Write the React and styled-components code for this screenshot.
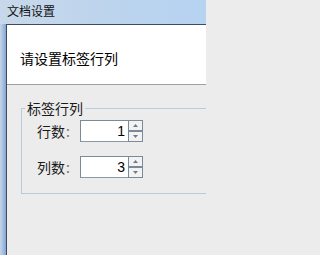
import styled, { createGlobalStyle } from "styled-components";

const GlobalStyle = createGlobalStyle`
  html, body {
    margin: 0;
    padding: 0;
    background: #ececec;
  }
  * {
    box-sizing: border-box;
  }
`;

const FONT = `"Noto Sans CJK SC", "Microsoft YaHei", sans-serif`;

const rows = [
  { label: "行数", value: 1 },
  { label: "列数", value: 3 },
];

const App = () => {
  return (
    <>
      <GlobalStyle />
      <Window>
        <TitleBar>文档设置</TitleBar>
        <Body>
          <LeftFrame />
          <Client>
            <Header>请设置标签行列</Header>
            <Panel>
              <GroupBox>
                <Legend>标签行列</Legend>
                {rows.map((row) => (
                  <Row key={row.label}>
                    <Label>
                      {row.label}
                      <Colon>:</Colon>
                    </Label>
                    <NumberBox>{row.value}</NumberBox>
                    <Spinner>
                      <SpinButton>
                        <Arrow viewBox="0 0 5 3">
                          <path d="M2.5 0 L5 3 L0 3 Z" />
                        </Arrow>
                      </SpinButton>
                      <SpinButton>
                        <Arrow viewBox="0 0 5 3">
                          <path d="M0 0 L5 0 L2.5 3 Z" />
                        </Arrow>
                      </SpinButton>
                    </Spinner>
                  </Row>
                ))}
              </GroupBox>
            </Panel>
          </Client>
        </Body>
      </Window>
    </>
  );
};

export default App;

const Window = styled.div`
  width: 206px;
  height: 255px;
  overflow: hidden;
  display: flex;
  flex-direction: column;
  font-family: ${FONT};
  color: #000;
`;

const TitleBar = styled.div`
  height: 24px;
  flex-shrink: 0;
  padding-left: 7px;
  font-size: 12px;
  line-height: 22px;
  color: #111;
  background: linear-gradient(to right, #c8d8ea 0%, #bed4ec 45%, #b6d3f2 100%);
`;

const Body = styled.div`
  flex: 1;
  display: flex;
  min-height: 0;
`;

const LeftFrame = styled.div`
  width: 6px;
  flex-shrink: 0;
  background: linear-gradient(to right, #c3d5ea 0%, #a6c0e0 50%, #84a6d1 100%);
`;

const Client = styled.div`
  flex: 1;
  min-width: 0;
  display: flex;
  flex-direction: column;
  border-left: 1px solid #3e4b5c;
  border-top: 1px solid #3e4b5c;
  background: #ececec;
`;

const Header = styled.div`
  height: 60px;
  flex-shrink: 0;
  padding-left: 13px;
  padding-top: 23px;
  font-size: 14px;
  line-height: 20px;
  background: #fff;
  border-bottom: 1px solid #a0a0a0;
`;

const Panel = styled.div`
  padding: 15px 0 0 14px;
  margin-right: -12px;
`;

const GroupBox = styled.fieldset`
  margin: 0;
  padding: 4px 0 15px 3px;
  border: 1px solid #bccbdc;
  display: flex;
  flex-direction: column;
  gap: 14px;
`;

const Legend = styled.legend`
  padding: 0 2px;
  font-size: 14px;
  line-height: 16px;
  color: #1a1a1a;
`;

const Row = styled.div`
  display: flex;
  align-items: center;
  height: 22px;
`;

const Label = styled.span`
  width: 55px;
  padding-left: 12px;
  font-size: 14px;
  line-height: 22px;
  color: #1a1a1a;
`;

const Colon = styled.span`
  margin-left: 1px;
  color: #8a7060;
`;

const NumberBox = styled.div`
  width: 48px;
  height: 22px;
  padding-right: 3px;
  text-align: right;
  font-family: "Liberation Sans", Arial, sans-serif;
  font-size: 14px;
  line-height: 20px;
  background: #fff;
  border: 1px solid #7a8a99;
  border-right: none;
  border-bottom-color: #8a98a6;
`;

const Spinner = styled.div`
  width: 15px;
  height: 22px;
  display: flex;
  flex-direction: column;
`;

const SpinButton = styled.div`
  height: 11px;
  display: flex;
  align-items: center;
  justify-content: center;
  background: #f2f2f2;
  border: 1px solid #7a8a99;
`;

const Arrow = styled.svg`
  width: 5px;
  height: 3px;
  fill: #6d7c8b;
`;
